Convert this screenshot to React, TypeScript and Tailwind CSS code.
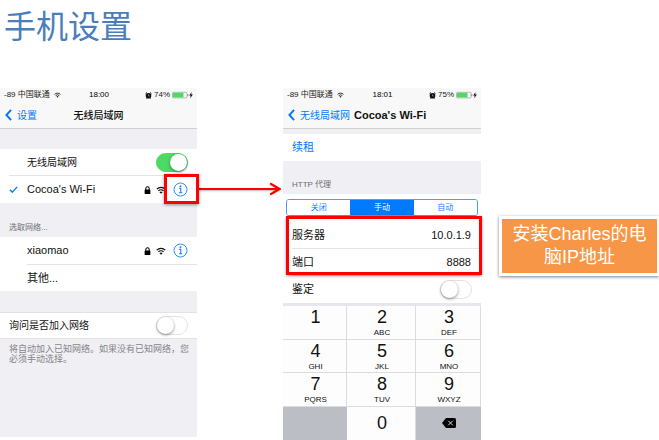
import type { ReactNode } from "react";

function WifiIcon({ className }: { className: string }) {
  return (
    <svg viewBox="0 0 20 16" className={className} aria-hidden="true">
      <path d="M1.5 6.2a12 12 0 0 1 17 0" fill="none" stroke="currentColor" strokeWidth="2.6" />
      <path d="M4.8 9.8a7.4 7.4 0 0 1 10.4 0" fill="none" stroke="currentColor" strokeWidth="2.6" />
      <path d="M10 15.5 6.9 12.3a4.4 4.4 0 0 1 6.2 0z" fill="currentColor" />
    </svg>
  );
}

function LockIcon() {
  return (
    <svg viewBox="0 0 12 14" className="h-2 w-[7px]" aria-hidden="true">
      <path d="M3 7V4.5a3 3 0 0 1 6 0V7" fill="none" stroke="#000" strokeWidth="1.8" />
      <rect x="1" y="6" width="10" height="8" rx="1" fill="#000" />
    </svg>
  );
}

function AlarmIcon() {
  return (
    <svg viewBox="0 0 14 14" className="h-[7px] w-[7px]" aria-hidden="true">
      <circle cx="7" cy="7.6" r="5.6" fill="#111" />
      <path d="M1 3.6 4 1M13 3.6 10 1M3 13l1.5-2M11 13 9.5 11" stroke="#111" strokeWidth="2" />
      <path d="M7 4.8V8h2.400" fill="none" stroke="#ccc" strokeWidth="1" />
    </svg>
  );
}

function BatteryIcon() {
  return (
    <svg viewBox="0 0 22 8" className="h-2 w-[22px]" aria-hidden="true">
      <rect x="0.5" y="1.3" width="14.5" height="5.6" rx="1" fill="#fff" stroke="#9a9a9a" strokeWidth="0.7" />
      <rect x="1" y="1.8" width="10.5" height="4.6" fill="#4cd964" />
      <path d="M15.8 3.200v2" stroke="#888" strokeWidth="1" />
      <path d="M19.6 1 17.2 4.6h1.5L18.2 7.200l2.700-3.800h-1.700z" fill="#111" />
    </svg>
  );
}

function Chevron() {
  return (
    <svg viewBox="0 0 8 14" className="h-3 w-[7px] shrink-0" aria-hidden="true">
      <path d="M7 1 1.600 7 7 13" fill="none" stroke="currentColor" strokeWidth="2.300" />
    </svg>
  );
}

function InfoButton({ name }: { name: string }) {
  return (
    <button type="button" aria-label={name} className="h-[15px] w-[15px]">
      <svg viewBox="0 0 30 30" className="h-full w-full">
        <circle cx="15" cy="15" r="13" fill="none" stroke="#2f8fff" strokeWidth="2" />
        <circle cx="15" cy="8.5" r="1.9" fill="#1480ff" />
        <path d="M12.500 12.800h3v8.500M12 21.500h6.500" fill="none" stroke="#1480ff" strokeWidth="2.200" />
      </svg>
    </button>
  );
}

function StatusBar({ time, charge }: { time: string; charge: string }) {
  return (
    <div className="grid h-[14px] grid-cols-[1fr_auto_1fr] items-center bg-[#f8f8f8] pl-1 pr-[3px] text-[8px] leading-[14px] text-[#222]">
      <span className="flex items-center gap-1 whitespace-nowrap">
        -89 中国联通
        <WifiIcon className="h-[6px] w-[7px]" />
      </span>
      <span className="font-medium text-black">{time}</span>
      <span className="flex items-center justify-end gap-[2px]">
        <AlarmIcon />
        {charge}
        <BatteryIcon />
      </span>
    </div>
  );
}

function Toggle({ id, on = false }: { id: string; on?: boolean }) {
  return (
    <input
      id={id}
      type="checkbox"
      defaultChecked={on}
      className="flex h-[19px] w-8 shrink-0 appearance-none items-center rounded-full border border-[#e2e2e2] bg-white before:h-[17px] before:w-[17px] before:rounded-full before:bg-white before:shadow-[0_1px_3px_rgba(0,0,0,0.45)] checked:justify-end checked:border-[#4cd964] checked:bg-[#4cd964]"
    />
  );
}

function Network({ name, checked = false, marked = false }: { name: string; checked?: boolean; marked?: boolean }) {
  return (
    <li className="relative flex h-[27px] items-center bg-white pl-[9px] pr-[9px]">
      <span className="flex w-[18px] shrink-0">
        {checked && (
          <svg viewBox="0 0 10 8" className="h-[7px] w-[9px]" aria-label="✓">
            <path d="M1 4.200 3.600 7 9.200 1" fill="none" stroke="#007aff" strokeWidth="1.600" />
          </svg>
        )}
      </span>
      <span className="flex-1 text-[11px]">{name}</span>
      <span className="flex items-center gap-[5px]">
        <LockIcon />
        <WifiIcon className="mr-[2px] h-2 w-[10px]" />
        <InfoButton name={name} />
      </span>
      {marked && (
        <span className="absolute -bottom-px -right-[2px] -top-[2px] w-[35px] border-[3px] border-[#f00] shadow-[0_1px_3px_rgba(0,0,0,0.4)]" />
      )}
    </li>
  );
}

function WifiPhone() {
  return (
    <section className="min-w-0 bg-[#efeff4] pb-[73px]">
      <StatusBar time="18:00" charge="74%" />
      <nav className="grid h-[27px] grid-cols-[1fr_auto_1fr] items-center border-b border-[#d0d0d3] bg-[#f8f8f8] px-[5px] text-[10px]">
        <button type="button" className="flex items-center gap-[5px] text-[#007aff]">
          <Chevron />
          设置
        </button>
        <h2 className="font-medium">无线局域网</h2>
      </nav>
      <div className="mt-5 bg-white pl-[9px]">
        <div className="flex h-[27px] items-center justify-between border-b border-[#e4e4e6] pl-[18px] pr-[9px] text-[10px]">
          <label htmlFor="wlan">无线局域网</label>
          <Toggle id="wlan" on />
        </div>
      </div>
      <ul>
        <Network name="Cocoa's Wi-Fi" checked marked />
      </ul>
      <h3 className="h-[34px] pl-[9px] pt-[18px] text-[8px] leading-[14px] text-[#6d6d72]">选取网络...</h3>
      <ul>
        <Network name="xiaomao" />
        <li className="flex h-[27px] items-center bg-white pl-[27px]">
          <button type="button" className="flex-1 self-stretch border-t border-[#e4e4e6] text-left text-[11px]">
            其他...
          </button>
        </li>
      </ul>
      <div className="mt-[21px] flex h-[27px] items-center justify-between border-y border-[#e2e2e5] bg-white pl-[9px] pr-[9px] text-[10px]">
        <label htmlFor="ask">询问是否加入网络</label>
        <Toggle id="ask" />
      </div>
      <p className="pl-[9px] pr-1 pt-[5px] text-[9px] leading-[10px] text-[#85858a]">
        将自动加入已知网络。如果没有已知网络，您必须手动选择。
      </p>
    </section>
  );
}

function Field({ id, label, value }: { id: string; label: string; value: string }) {
  return (
    <div className="ml-[9px] flex h-[27px] items-center border-b border-[#e4e4e6] pr-[10px]">
      <label htmlFor={id} className="shrink-0 text-[11px]">
        {label}
      </label>
      <input id={id} defaultValue={value} className="w-full min-w-0 bg-transparent text-right text-[11px] outline-none" />
    </div>
  );
}

function Key({ digit, letters }: { digit: string; letters?: string }) {
  return (
    <button
      type="button"
      className="flex flex-col items-center border-b border-r border-[#dcdce0] bg-[#fdfdfd] pl-[2px] pt-px"
    >
      <span className="text-[18px] leading-[21px]">{digit}</span>
      {letters && <span className="text-[8px] leading-[9px]">{letters}</span>}
    </button>
  );
}

const keys: [string, string?][] = [
  ["1"],
  ["2", "ABC"],
  ["3", "DEF"],
  ["4", "GHI"],
  ["5", "JKL"],
  ["6", "MNO"],
  ["7", "PQRS"],
  ["8", "TUV"],
  ["9", "WXYZ"],
];

function Segment({ children, active = false }: { children: ReactNode; active?: boolean }) {
  return (
    <button
      type="button"
      aria-pressed={active}
      className={active ? "bg-[#007aff] text-white" : "bg-white text-[#1480ff]"}
    >
      {children}
    </button>
  );
}

function ProxyPhone() {
  return (
    <section className="min-w-0 bg-white">
      <StatusBar time="18:01" charge="75%" />
      <nav className="flex h-[27px] items-center gap-1 whitespace-nowrap border-b border-[#d0d0d3] bg-[#f8f8f8] pl-[5px]">
        <button type="button" className="flex items-center gap-[5px] text-[10px] text-[#007aff]">
          <Chevron />
          无线局域网
        </button>
        <h2 className="text-[11px] font-bold">Cocoa's Wi-Fi</h2>
      </nav>
      <div className="border-t-[5px] border-[#efeff4] pl-[9px]">
        <button type="button" className="h-[27px] text-[11px] text-[#007aff]">
          续租
        </button>
      </div>
      <h3 className="h-[33px] bg-[#efeff4] pl-[9px] pt-[17px] text-[8px] leading-[14px] text-[#6d6d72]">HTTP 代理</h3>
      <div className="px-[3px] pb-[6px] pt-[5px]">
        <div className="grid h-[17px] grid-cols-3 overflow-hidden rounded-[3px] border border-[#4a9dff] text-[8px]">
          <Segment>关闭</Segment>
          <Segment active>手动</Segment>
          <Segment>自动</Segment>
        </div>
      </div>
      <div className="relative">
        <Field id="server" label="服务器" value="10.0.1.9" />
        <Field id="port" label="端口" value="8888" />
        <span className="pointer-events-none absolute -right-px -top-[6px] bottom-px left-[3px] border-[3px] border-[#f00] shadow-[0_1px_3px_rgba(0,0,0,0.4)]" />
      </div>
      <div className="flex h-[27px] items-center justify-between pl-[9px] pr-[9px] text-[11px]">
        <label htmlFor="auth">鉴定</label>
        <Toggle id="auth" />
      </div>
      <div className="grid h-[137px] grid-cols-[64fr_69fr_65fr] grid-rows-4 border-t-[3px] border-[#e6e6ec]">
        {keys.map(([digit, letters]) => (
          <Key key={digit} digit={digit} letters={letters} />
        ))}
        <span className="bg-[#bbbfc5]" />
        <button type="button" className="border-r border-[#dcdce0] bg-[#fdfdfd] pl-[2px] text-[18px] leading-[21px]">
          0
        </button>
        <button type="button" aria-label="⌫" className="flex items-center justify-center bg-[#bbbfc5]">
          <svg viewBox="0 0 28 20" className="h-[10px] w-[14px]">
            <path d="M8 0h17a3 3 0 0 1 3 3v14a3 3 0 0 1-3 3H8L0 10z" fill="#000" />
            <path d="m12.500 5.500 9 9m0-9-9 9" stroke="#d5d8dc" strokeWidth="2" />
          </svg>
        </button>
      </div>
    </section>
  );
}

export default function App() {
  return (
    <main className="bg-white font-['Liberation_Sans','Noto_Sans_CJK_SC',sans-serif] text-[#111]">
      <h1 className="pb-10 pl-1 font-['Noto_Sans_CJK_SC',sans-serif] text-[32px] leading-[48px] text-[#4a7ebb]">手机设置</h1>
      <div className="grid grid-cols-[197fr_86fr_198fr_18fr_160fr] items-start">
        <WifiPhone />
        <div className="flex items-center pl-[2px] pr-[2px] pt-[94px]">
          <span className="h-[2px] flex-1 bg-[#f00] shadow-[0_1px_2px_rgba(0,0,0,0.3)]" />
          <svg viewBox="0 0 12 14" className="-ml-[11px] h-[14px] w-3" aria-hidden="true">
            <path d="M2 2 10.500 7 2 12" fill="none" stroke="#f00" strokeWidth="2.400" strokeLinecap="round" />
          </svg>
        </div>
        <ProxyPhone />
        <div />
        <aside className="mt-32 border-[3px] border-r-2 border-white bg-[#f79646] px-2 py-1 text-center text-[18px] leading-[23px] text-white shadow-[0_1px_3px_rgba(0,0,0,0.5)]">
          安装Charles的电脑IP地址
        </aside>
      </div>
    </main>
  );
}
